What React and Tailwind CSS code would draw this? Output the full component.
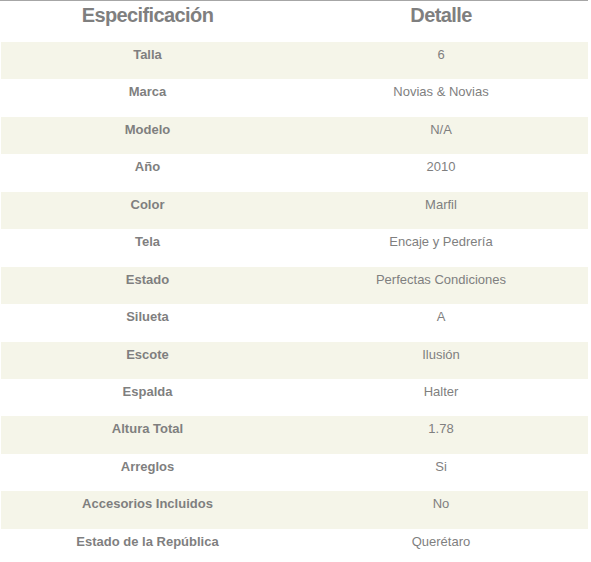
export default function App() {
  const rows = [
    ["Talla", "6"],
    ["Marca", "Novias & Novias"],
    ["Modelo", "N/A"],
    ["Año", "2010"],
    ["Color", "Marfil"],
    ["Tela", "Encaje y Pedrería"],
    ["Estado", "Perfectas Condiciones"],
    ["Silueta", "A"],
    ["Escote", "Ilusión"],
    ["Espalda", "Halter"],
    ["Altura Total", "1.78"],
    ["Arreglos", "Si"],
    ["Accesorios Incluidos", "No"],
    ["Estado de la República", "Querétaro"],
  ];
  return (
    <div className="w-[591px] h-[562px] bg-white text-[#7f7f7f] font-['Liberation_Sans',Arial,sans-serif]">
      <div className="w-[588px] pl-[1px] border-t border-[#a6a6a6]">
        <div className="flex h-[41px] text-[20px] font-bold tracking-[-0.6px] leading-[28px]">
          <div className="w-[293px] text-center">Especificación</div>
          <div className="w-[294px] text-center">Detalle</div>
        </div>
        {rows.map(([k, v], i) => (
          <div
            key={k}
            className={
              "flex h-[37.45px] text-[13px] leading-[15px] pt-[5px] " +
              (i % 2 === 0 ? "bg-[#f5f5e9]" : "bg-white")
            }
          >
            <div className="w-[293px] text-center font-bold">{k}</div>
            <div className="w-[294px] text-center">{v}</div>
          </div>
        ))}
      </div>
    </div>
  );
}
